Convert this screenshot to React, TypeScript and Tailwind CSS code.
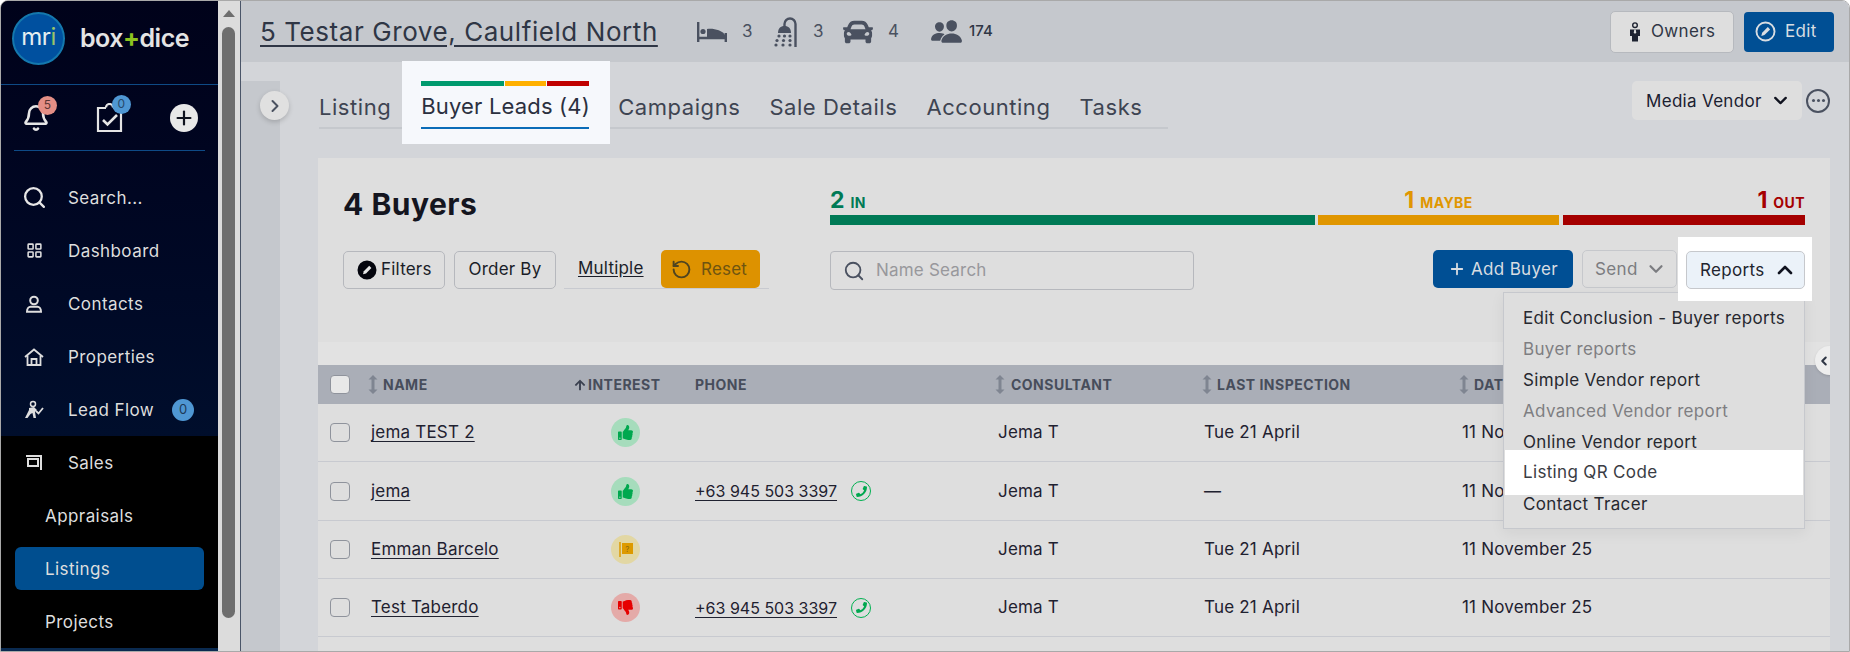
import React from "react";
import { ChevronRight, ChevronLeft, ChevronDown, ChevronUp, Search, LayoutGrid, Plus, RotateCw, Bell } from "lucide-react";
import { FaThumbsUp, FaThumbsDown, FaPhoneAlt, FaCar, FaArrowUp } from "react-icons/fa";
import { IoPeople } from "react-icons/io5";

const ShowerIcon = () => (
  <svg width="25" height="30" viewBox="0 0 25 30" fill="#4a5160">
    <path d="M22.500 30V7a5.500 5.500 0 0 0-11 0v2" fill="none" stroke="#4a5160" strokeWidth="2.400" />
    <path d="M5 16c0-4.500 2.500-7 6.500-7s6.500 2.500 6.500 7z" />
    <circle cx="6" cy="19" r="1.600" /><circle cx="11.500" cy="19" r="1.600" /><circle cx="17" cy="19" r="1.600" />
    <circle cx="4" cy="23.500" r="1.600" /><circle cx="10.500" cy="23.500" r="1.600" /><circle cx="17" cy="23.500" r="1.600" />
    <circle cx="3" cy="28" r="1.600" /><circle cx="10" cy="28" r="1.600" /><circle cx="17" cy="28" r="1.600" />
  </svg>
);

const BedIcon = () => (
  <svg width="30" height="22" viewBox="0 0 30 22" fill="#4a5160">
    <path d="M1.200 1v20M28.800 12v9M1 17h28" fill="none" stroke="#4a5160" strokeWidth="2.400" />
    <circle cx="6" cy="10.500" r="2.600" />
    <path d="M10 8c6-1 15 1 18 6v2H10z" />
  </svg>
);

const PenCircle = ({ size, color, fill }: { size: number; color: string; fill?: boolean }) => (
  <svg width={size} height={size} viewBox="0 0 20 20">
    <circle cx="10" cy="10" r="8.600" fill={fill ? color : "none"} stroke={color} strokeWidth="1.800" />
    <path d="M6 14.200l.8-3 5.400-5.400 2.200 2.200-5.400 5.400z" fill={fill ? "#e6e6e6" : color} />
  </svg>
);

const OwnerIcon = () => (
  <svg width="14" height="20" viewBox="0 0 14 20" fill="#1d2230">
    <circle cx="7" cy="3.200" r="2.300" fill="none" stroke="#1d2230" strokeWidth="1.400" />
    <path d="M2 7.500h10v6.500h-2v5.500H4V14H2z" />
    <path d="M6.300 7.500h1.400l.5 3-1.200 1.500-1.200-1.500z" fill="#dedede" />
  </svg>
);

const TaskIcon = () => (
  <svg width="28" height="30" viewBox="0 0 28 30" fill="none" stroke="#e4e4e4" strokeWidth="2.200">
    <path d="M17 5h8v23H2V5h8" />
    <path d="M10 4.500a3.500 3.500 0 0 1 7 0" />
    <path d="M7 17l4.500 4.500L21 12" strokeWidth="2.600" />
  </svg>
);

const ContactIcon = () => (
  <svg width="18" height="18" viewBox="0 0 18 18" fill="none" stroke="#dedede" strokeWidth="2">
    <circle cx="9" cy="5.500" r="3.800" />
    <path d="M2 16.800c0-3.500 2-5 3.500-5h7c1.500 0 3.500 1.500 3.500 5z" />
  </svg>
);

const HomeIcon = () => (
  <svg width="20" height="18" viewBox="0 0 20 18" fill="none" stroke="#dedede" strokeWidth="1.800">
    <path d="M1 9l9-7.500L19 9" />
    <path d="M3.500 7.500V17h13V7.500" />
    <path d="M7.500 17v-6h5v6" />
  </svg>
);

const LeadIcon = () => (
  <svg width="20" height="20" viewBox="0 0 20 20" fill="#dedede">
    <circle cx="9" cy="4" r="2.500" fill="none" stroke="#dedede" strokeWidth="1.500" />
    <path d="M5 8l5-1 3 3-2 2 1 6H9.500l-1-5-2 1-3 4H1l3-6 1-2z" />
    <path d="M12 11l2.500 2.500L19 8" fill="none" stroke="#dedede" strokeWidth="1.800" />
  </svg>
);

const SalesIcon = () => (
  <svg width="16" height="16" viewBox="0 0 16 16" fill="none" stroke="#dedede" strokeWidth="2">
    <path d="M0 1h15v14" />
    <path d="M2 4h10v7H2z" />
  </svg>
);

const FlagIcon = () => (
  <svg width="14" height="15" viewBox="0 0 14 15">
    <path d="M1 0v15" stroke="#dd9a00" strokeWidth="1.500" />
    <path d="M3 1h11v11H3z" fill="#dd9a00" />
    <text x="8.500" y="9.500" fontSize="8" fill="#8f6c10" textAnchor="middle" fontFamily="Inter">?</text>
  </svg>
);

const SortIcon = () => (
  <svg width="10" height="19" viewBox="0 0 10 19" fill="#7f8591" className="shrink-0">
    <path d="M5 0l4.500 4.500h-3v10h3L5 19 .5 14.500h3v-10h-3z" />
  </svg>
);

const Logo = () => (
  <div className="h-[84px] flex items-center pl-[11px] pb-[8px] border-b border-[#0e4a86]">
    <div className="w-[53px] h-[53px] rounded-full bg-[#00509f] border-[2px] border-[#1478ad] flex items-center justify-center text-[#e6eef0] text-[24px] tracking-[-0.02em] pb-[3px]">
      mr<span className="text-[#9ac36a]">i</span>
    </div>
    <div className="ml-[15px] text-[25px] font-semibold tracking-[-0.02em] text-[#e4e4e4]">
      box<span className="text-[#8cc21f] font-bold">+</span>dice
    </div>
  </div>
);

const QuickActions = () => (
  <div className="h-[66px] border-b border-[#0e4a86] flex items-center mx-[13px] relative">
    <div className="relative ml-[8px] w-[28px] flex justify-center">
      <Bell size={28} color="#e6e6e6" strokeWidth={2.200} />
      <span className="absolute left-[16px] -top-[8px] w-[19px] h-[19px] rounded-full bg-[#e38e85] text-[#5a3634] text-[12px] flex items-center justify-center">5</span>
    </div>
    <div className="relative ml-[46px] w-[28px]">
      <TaskIcon />
      <span className="absolute left-[16px] -top-[8px] w-[19px] h-[19px] rounded-full bg-[#4f97d3] text-[#26496a] text-[12px] flex items-center justify-center">0</span>
    </div>
    <div className="ml-[46px] w-[28px] h-[28px] rounded-full bg-[#e8e8e8] flex items-center justify-center">
      <Plus size={22} color="#10131f" strokeWidth={2.400} />
    </div>
  </div>
);

const NavRow = ({ icon, label, badge }: { icon: React.ReactNode; label: string; badge?: boolean }) => (
  <div className="h-[53px] flex items-center text-[#dedede]">
    <div className="w-[67px] flex justify-center pl-[11px] pr-[12px] shrink-0">{icon}</div>
    <span className="pt-[2px]">{label}</span>
    {badge && (
      <span className="ml-[18px] w-[22px] h-[22px] rounded-full bg-[#4f97d3] text-[#1d3a58] text-[13px] flex items-center justify-center">0</span>
    )}
  </div>
);

const Sidebar = () => (
  <aside className="w-[217px] shrink-0 flex flex-col bg-black text-[17px] tracking-[0.025em] overflow-hidden">
    <div className="bg-gradient-to-b from-[#00021a] to-[#000e2c]">
      <Logo />
      <QuickActions />
      <div className="pt-[20px]">
        <NavRow icon={<Search size={25} color="#e6e6e6" strokeWidth={2.200} />} label="Search..." />
        <NavRow icon={<LayoutGrid size={17} color="#dedede" strokeWidth={2.200} />} label="Dashboard" />
        <NavRow icon={<ContactIcon />} label="Contacts" />
        <NavRow icon={<HomeIcon />} label="Properties" />
        <NavRow icon={<LeadIcon />} label="Lead Flow" badge />
      </div>
    </div>
    <NavRow icon={<SalesIcon />} label="Sales" />
    <div className="h-[53px] flex items-center pl-[44px] pt-[2px] text-[#dedede]">Appraisals</div>
    <div className="h-[53px] flex items-center px-[14px]">
      <div className="w-full h-[43px] rounded-[6px] bg-[#004e8f] text-[#dedede] flex items-center pl-[30px] pt-[2px]">Listings</div>
    </div>
    <div className="h-[53px] flex items-center pl-[44px] pt-[2px] text-[#dedede]">Projects</div>
    <div className="flex-1 bg-[#0a2a50]" />
  </aside>
);

const Scrollbar = () => (
  <div className="w-[23px] shrink-0 bg-[#dcdcdc] border-r border-[#4a5568] flex flex-col items-center pr-[1px]">
    <div className="mt-[9px] w-0 h-0 border-x-[6px] border-x-transparent border-b-[7px] border-b-[#6e6e6e]" />
    <div className="mt-[10px] w-[13px] h-[591px] rounded-full bg-[#6e6e6e]" />
  </div>
);

const Header = () => (
  <header className="h-[61px] shrink-0 bg-[#c5c8cd] flex items-center pl-[19px] pr-[15px]">
    <a className="text-[26px] text-[#2f3645] underline underline-offset-[4px] tracking-[0.022em] w-[437px] shrink-0 whitespace-nowrap">5 Testar Grove, Caulfield North</a>
    <div className="flex items-center w-[76px]">
      <BedIcon />
      <span className="ml-[15px] text-[17px] text-[#4a5160]">3</span>
    </div>
    <div className="flex items-center w-[70px]">
      <ShowerIcon />
      <span className="ml-[15px] text-[17px] text-[#4a5160]">3</span>
    </div>
    <div className="flex items-center w-[87px]">
      <FaCar size={30} color="#4a5160" />
      <span className="ml-[15px] text-[17px] text-[#4a5160]">4</span>
    </div>
    <div className="flex items-center">
      <IoPeople size={33} color="#4a5160" />
      <span className="ml-[6px] text-[15px] font-medium text-[#2f3645]">174</span>
    </div>
    <div className="ml-auto flex items-center gap-[10px]">
      <button className="w-[124px] h-[42px] rounded-[5px] bg-[#dedede] border border-[#b6b9be] flex items-center pl-[17px] text-[17px] tracking-[0.02em] text-[#2f3645]">
        <OwnerIcon />
        <span className="ml-[9px] pt-[1px]">Owners</span>
      </button>
      <button className="w-[90px] h-[40px] rounded-[4px] bg-[#004f94] flex items-center pl-[11px] text-[17px] tracking-[0.02em] text-[#d8dde2]">
        <PenCircle size={21} color="#d8dde2" />
        <span className="ml-[9px] pt-[1px]">Edit</span>
      </button>
    </div>
  </header>
);

const Tabs = () => (
  <div className="h-[96px] shrink-0 flex items-start justify-between pr-[19px]">
    <div className="ml-[39px] mt-[19px] h-[48px] border-b-[2px] border-[#c5c8cd] w-[849px] flex items-end gap-[29px] text-[22px] text-[#3e4452] tracking-[0.025em]">
      <span className="h-[48px] leading-[56px]">Listing</span>
      <div className="relative w-[168px] h-[48px] ml-[1px] mb-[-2px]">
        <div className="absolute -left-[19px] -right-[21px] -top-[20px] -bottom-[15px] bg-[#f6f8fc]" />
        <div className="relative h-full flex flex-col">
          <div className="flex gap-[1px] h-[5px]">
            <div className="w-[83px] bg-[#009a6e]" />
            <div className="w-[41px] bg-[#ffb000]" />
            <div className="w-[42px] bg-[#c00000]" />
          </div>
          <div className="flex-1 flex items-center whitespace-nowrap text-[#2b3040] tracking-[0.008em]">Buyer Leads (4)</div>
          <div className="h-[2px] bg-[#0a6cb8]" />
        </div>
      </div>
      <span className="h-[48px] leading-[56px]">Campaigns</span>
      <span className="h-[48px] leading-[56px]">Sale Details</span>
      <span className="h-[48px] leading-[56px]">Accounting</span>
      <span className="h-[48px] leading-[56px]">Tasks</span>
    </div>
    <div className="mt-[19px] flex items-center gap-[4px]">
      <div className="w-[170px] h-[39px] rounded-[5px] bg-[#dedede] flex items-center pl-[14px] text-[17px] tracking-[0.018em] text-[#1a2030]">
        <span className="pt-[2px]">Media Vendor</span>
        <ChevronDown size={21} className="ml-[8px]" color="#10131f" strokeWidth={2.600} />
      </div>
      <div className="w-[24px] h-[24px] rounded-full border-[2px] border-[#4a5160] flex items-center justify-center gap-[2px]">
        <i className="w-[3px] h-[3px] rounded-full bg-[#4a5160]" />
        <i className="w-[3px] h-[3px] rounded-full bg-[#4a5160]" />
        <i className="w-[3px] h-[3px] rounded-full bg-[#4a5160]" />
      </div>
    </div>
  </div>
);

const Bars = () => (
  <div className="flex gap-[3px] w-[975px] pt-[25px]">
    <div className="w-[485px]">
      <div className="h-[32px] flex items-baseline text-[#007a56] font-bold"><span className="text-[23px]">2</span><span className="ml-[6px] text-[14px] tracking-[0.03em]">IN</span></div>
      <div className="h-[10px] bg-[#007a56]" />
    </div>
    <div className="w-[241px]">
      <div className="h-[32px] flex items-baseline justify-center text-[#e09600] font-bold"><span className="text-[23px]">1</span><span className="ml-[6px] text-[14px] tracking-[0.03em]">MAYBE</span></div>
      <div className="h-[10px] bg-[#e09600]" />
    </div>
    <div className="w-[242px] ml-[1px]">
      <div className="h-[32px] flex items-baseline justify-end text-[#a50000] font-bold"><span className="text-[23px]">1</span><span className="ml-[6px] text-[14px] tracking-[0.03em]">OUT</span></div>
      <div className="h-[10px] bg-[#a50000]" />
    </div>
  </div>
);

const MenuItem = ({ label, muted }: { label: string; muted?: boolean }) => (
  <div className={"h-[31px] flex items-center pl-[19px] whitespace-nowrap " + (muted ? "text-[#7e7e82]" : "text-[#26282f]")}>{label}</div>
);

const ReportsMenu = () => (
  <div className="absolute z-20 right-[25px] top-[134px] w-[302px] h-[237px] bg-[#dedede] border border-[#c6c8cd] shadow-[0_4px_14px_rgba(0,0,0,0.06)] pt-[10px] text-[17px] tracking-[0.02em]">
    <MenuItem label="Edit Conclusion - Buyer reports" />
    <MenuItem label="Buyer reports" muted />
    <MenuItem label="Simple Vendor report" />
    <MenuItem label="Advanced Vendor report" muted />
    <MenuItem label="Online Vendor report" />
    <div className="relative h-[45px] -mt-[8px] -mb-[6px] mx-[1px] bg-white flex items-center pl-[18px] text-[#3a3c44]">Listing QR Code</div>
    <div className="relative">
      <MenuItem label="Contact Tracer" />
    </div>
  </div>
);

const Toolbar = () => (
  <div className="flex items-start h-[50px]">
    <div className="w-[487px] shrink-0 flex items-center text-[17px] tracking-[0.012em] text-[#1a1d28]">
      <button className="w-[102px] h-[38px] rounded-[5px] border border-[#b6b8bd] flex items-center pl-[13px] gap-[4px]">
        <PenCircle size={20} color="#05060e" fill />
        Filters
      </button>
      <button className="w-[102px] h-[38px] ml-[9px] rounded-[5px] border border-[#b6b8bd] flex items-center justify-center">Order By</button>
      <div className="ml-[8px] w-[205px] h-[39px] border-b border-[#c8cad0] flex">
        <span className="ml-[14px] w-[83px] leading-[37px] underline underline-offset-2">Multiple</span>
        <div className="w-[99px] h-[38px] rounded-[5px] bg-[#dd9200] flex items-center pl-[10px] text-[#6e5410]">
          <RotateCw size={21} color="#4f4420" strokeWidth={2.200} className="-scale-x-100" />
          <span className="ml-[9px] pt-[1px]">Reset</span>
        </div>
      </div>
    </div>
    <div className="w-[364px] h-[39px] mt-[1px] rounded-[4px] border border-[#b6b8bd] flex items-center pl-[12px] text-[17px] tracking-[0.012em] text-[#98989c]">
      <Search size={22} color="#4a5160" strokeWidth={2} />
      <span className="ml-[11px]">Name Search</span>
    </div>
    <div className="ml-auto flex items-center text-[17px] tracking-[0.02em] mr-[18px]">
      <button className="w-[140px] h-[38px] rounded-[5px] bg-[#004f94] text-[#d8dde2] flex items-center justify-center">
        <Plus size={18} strokeWidth={2.400} className="mr-[5px]" />
        <span className="pt-[2px]">Add Buyer</span>
      </button>
      <button className="w-[95px] h-[38px] ml-[9px] rounded-[5px] border border-[#c6c8cc] text-[#7b7c80] flex items-center pl-[12px]">
        <span className="pt-[2px]">Send</span>
        <ChevronDown size={22} className="ml-[7px]" strokeWidth={2.400} />
      </button>
      <div className="relative z-30 ml-[1px] -my-[14px] p-[14px_7px_12px_8px] bg-white">
        <button className="w-[119px] h-[38px] rounded-[5px] border border-[#c6c8cc] bg-[#ebf2f9] text-[#22252f] flex items-center pl-[13px]">
          <span className="pt-[2px]">Reports</span>
          <ChevronUp size={24} className="ml-[8px]" color="#10131f" strokeWidth={2.600} />
        </button>
      </div>
    </div>
  </div>
);

const gridCols = "grid grid-cols-[53px_203px_121px_299px_207px_257px_1fr] items-center";

const SortHead = ({ label, cls, gap }: { label: string; cls: string; gap: string }) => (
  <div className={"flex items-center " + cls}>
    <SortIcon />
    <span className={gap}>{label}</span>
  </div>
);

const CheckBox = ({ head }: { head?: boolean }) => (
  <div className={"ml-[12px] w-[20px] h-[19px] rounded-[4px] border border-[#8f939c] " + (head ? "bg-[#e8e8e8]" : "")} />
);

const Interest = ({ kind }: { kind: "up" | "maybe" | "down" }) => {
  const bg = kind === "up" ? "bg-[#a6dcbc]" : kind === "maybe" ? "bg-[#e2d7a4]" : "bg-[#e4aaa8]";
  return (
    <div className={"ml-[37px] w-[29px] h-[29px] rounded-full flex items-center justify-center " + bg}>
      {kind === "up" && <FaThumbsUp size={15} color="#00a84f" />}
      {kind === "maybe" && <FlagIcon />}
      {kind === "down" && <FaThumbsDown size={15} color="#e60000" />}
    </div>
  );
};

const rows = [
  { name: "jema TEST 2", kind: "up" as const, phone: false, last: "Tue 21 April", h: "h-[58px]" },
  { name: "jema", kind: "up" as const, phone: true, last: "—", h: "h-[59px]" },
  { name: "Emman Barcelo", kind: "maybe" as const, phone: false, last: "Tue 21 April", h: "h-[58px]" },
  { name: "Test Taberdo", kind: "down" as const, phone: true, last: "Tue 21 April", h: "h-[58px]" },
];

const Table = () => (
  <div className="text-[17px] tracking-[0.012em] text-[#1f2130]">
    <div className={gridCols + " h-[39px] bg-[#aaaeb7] text-[14px] font-bold tracking-[0.035em] text-[#474d5b]"}>
      <CheckBox head />
      <SortHead label="NAME" cls="-ml-[3px]" gap="ml-[5px]" />
      <div className="flex items-center">
        <FaArrowUp size={12} color="#3b4150" />
        <span className="ml-[2px]">INTEREST</span>
      </div>
      <div>PHONE</div>
      <SortHead label="CONSULTANT" cls="pl-[1px]" gap="ml-[6px]" />
      <SortHead label="LAST INSPECTION" cls="pl-[1px]" gap="ml-[5px]" />
      <SortHead label="DATE ADDED" cls="pl-[1px]" gap="ml-[5px]" />
    </div>
    {rows.map((r) => (
      <div key={r.name} className={gridCols + " border-b border-[#c8cad0] " + r.h}>
        <CheckBox />
        <a className="underline underline-offset-[3px] pt-[1px]">{r.name}</a>
        <Interest kind={r.kind} />
        <div className="flex items-center">
          {r.phone && (
            <>
              <a className="underline underline-offset-[3px] text-[16px] tracking-normal">+63 945 503 3397</a>
              <span className="ml-[14px] w-[20px] h-[20px] rounded-full border-[1.5px] border-[#00b050] flex items-center justify-center">
                <FaPhoneAlt size={11} color="#00a84f" className="-scale-x-100" />
              </span>
            </>
          )}
        </div>
        <div className="pl-[4px] pt-[1px]">Jema T</div>
        <div className="pl-[3px] pt-[1px]">{r.last}</div>
        <div className="pl-[4px] pt-[1px]">11 November 25</div>
      </div>
    ))}
  </div>
);

const Card = () => (
  <section className="relative mt-0 ml-[38px] w-[1512px] flex-1 bg-[#dedede] overflow-hidden">
    <div className="h-[184px] pl-[25px]">
      <div className="flex h-[92px]">
        <div className="w-[487px] shrink-0 pt-[26px] text-[30px] leading-[40px] font-bold text-[#14151f] tracking-[0.017em]">4 Buyers</div>
        <Bars />
      </div>
      <Toolbar />
    </div>
    <div className="h-[23px] bg-[#e2e2e2]" />
    <Table />
    <ReportsMenu />
    <div className="absolute z-10 -right-[14px] top-[188px] w-[29px] h-[29px] rounded-full bg-[#eeeeee] shadow flex items-center pl-[2px]">
      <ChevronLeft size={14} color="#2f3645" strokeWidth={3.500} />
    </div>
  </section>
);

export default function App() {
  return (
    <div className="w-[1850px] h-[652px] flex overflow-hidden rounded-t-[8px] border border-[#a9a9a9] font-[family-name:Inter,sans-serif]">
      <Sidebar />
      <Scrollbar />
      <main className="flex-1 min-w-0 flex flex-col bg-[#d3d5d9]">
        <Header />
        <div className="flex-1 flex min-h-0">
          <div className="relative w-[39px] shrink-0 mt-[19px] bg-[#c5c8cd]">
            <div className="absolute left-[19px] top-[10px] w-[29px] h-[29px] rounded-full bg-[#e0e0e0] shadow-[0_2px_5px_rgba(0,0,0,0.18)] flex items-center justify-center">
              <ChevronRight size={20} color="#4a5160" strokeWidth={2.400} />
            </div>
          </div>
          <div className="flex-1 min-w-0 flex flex-col">
            <Tabs />
            <Card />
          </div>
        </div>
      </main>
    </div>
  );
}
